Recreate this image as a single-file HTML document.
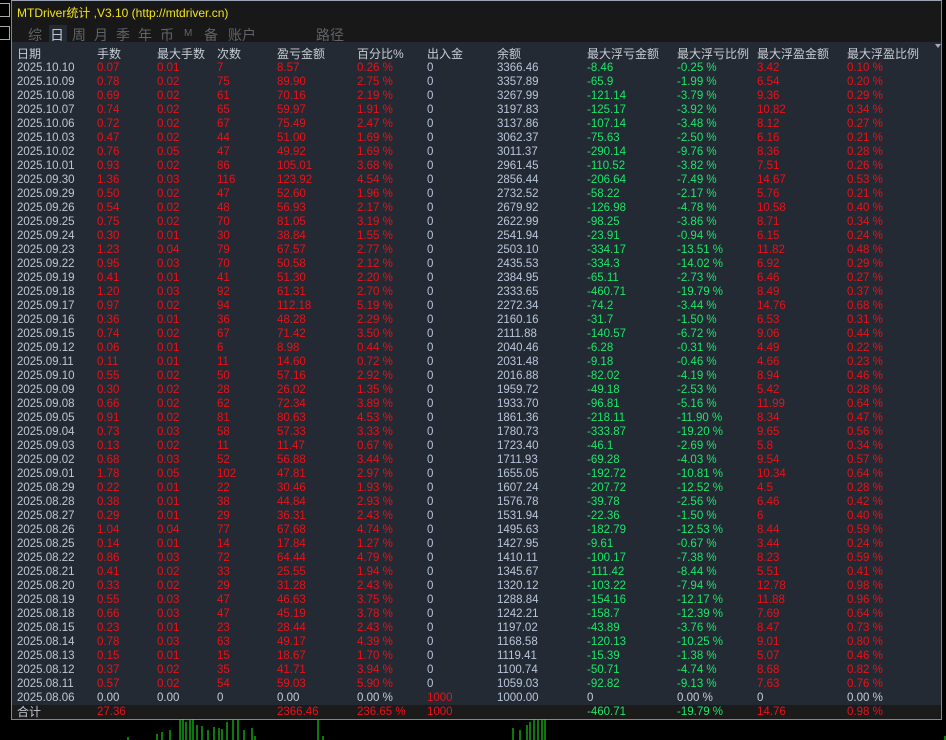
<!DOCTYPE html><html><head><meta charset="utf-8"><style>
body{margin:0;width:946px;height:740px;background:#000;overflow:hidden;position:relative;font-family:"Liberation Sans","Noto Sans CJK SC",sans-serif;}
#p{position:absolute;left:11px;top:0;width:929px;height:718px;border:1px solid #7c8898;border-top-color:#9aa4b4;background:#232a33;}
#t{position:absolute;left:0;top:0;width:929px;height:41px;background:#181818;}
.tt{position:absolute;left:5px;top:3px;color:#f0e418;font-size:12px;}
.tab{position:absolute;top:24px;color:#606468;font-size:14px;}
.r{position:absolute;left:0;width:929px;height:14px;font-size:11.5px;line-height:14px;}
.r span{position:absolute;top:0;white-space:nowrap;}
.h{font-size:12px;color:#c8ccd4;top:45px;height:16px;line-height:16px}
.c0{left:5px}.c1{left:85px}.c2{left:145px}.c3{left:205px}.c4{left:265px}.c5{left:345px}.c6{left:415px}.c7{left:485px}.c8{left:575px}.c9{left:665px}.c10{left:745px}.c11{left:835px}
.d{color:#c0c6d2}.R{color:#ee1018}.G{color:#18e868}.B{color:#b8c6dc}.W{color:#c8ccd8}
#tot{top:704px;height:14px;background:#1b1b1b}
</style></head><body>
<div style="position:absolute;left:0;top:3px;width:9px;height:12px;border:1px solid #aaa;border-left:none"></div>
<div style="position:absolute;left:0;top:26px;width:9px;height:12px;border:1px solid #aaa;border-left:none"></div>
<div id="p">
<div id="t"><div class="tt">MTDriver统计 ,V3.10 (http://mtdriver.cn)</div>
<div style="position:absolute;left:37px;top:24px;width:18px;height:17px;background:#232a33"></div>
<span class="tab" style="left:16px">综</span><span class="tab" style="left:38px;color:#c0c6d0">日</span><span class="tab" style="left:60px">周</span><span class="tab" style="left:82px">月</span><span class="tab" style="left:104px">季</span><span class="tab" style="left:126px">年</span><span class="tab" style="left:148px">币</span><span class="tab" style="left:172px;font-size:10px;top:27px">M</span><span class="tab" style="left:192px">备</span><span class="tab" style="left:216px">账户</span><span class="tab" style="left:304px">路径</span>
</div>
<div style="position:absolute;right:0;top:43px;width:0;height:0;border-left:3px solid transparent;border-right:3px solid transparent;border-top:4px solid #aab"></div>
<div class="r h"><span class="c0">日期</span><span class="c1">手数</span><span class="c2">最大手数</span><span class="c3">次数</span><span class="c4">盈亏金额</span><span class="c5">百分比%</span><span class="c6">出入金</span><span class="c7">余额</span><span class="c8">最大浮亏金额</span><span class="c9">最大浮亏比例</span><span class="c10">最大浮盈金额</span><span class="c11">最大浮盈比例</span></div>
<div class="r" style="top:60px"><span class="c0 d">2025.10.10</span><span class="c1 R">0.07</span><span class="c2 R">0.01</span><span class="c3 R">7</span><span class="c4 R">8.57</span><span class="c5 R">0.26 %</span><span class="c6 B">0</span><span class="c7 B">3366.46</span><span class="c8 G">-8.46</span><span class="c9 G">-0.25 %</span><span class="c10 R">3.42</span><span class="c11 R">0.10 %</span></div>
<div class="r" style="top:74px"><span class="c0 d">2025.10.09</span><span class="c1 R">0.78</span><span class="c2 R">0.02</span><span class="c3 R">75</span><span class="c4 R">89.90</span><span class="c5 R">2.75 %</span><span class="c6 B">0</span><span class="c7 B">3357.89</span><span class="c8 G">-65.9</span><span class="c9 G">-1.99 %</span><span class="c10 R">6.54</span><span class="c11 R">0.20 %</span></div>
<div class="r" style="top:88px"><span class="c0 d">2025.10.08</span><span class="c1 R">0.69</span><span class="c2 R">0.02</span><span class="c3 R">61</span><span class="c4 R">70.16</span><span class="c5 R">2.19 %</span><span class="c6 B">0</span><span class="c7 B">3267.99</span><span class="c8 G">-121.14</span><span class="c9 G">-3.79 %</span><span class="c10 R">9.36</span><span class="c11 R">0.29 %</span></div>
<div class="r" style="top:102px"><span class="c0 d">2025.10.07</span><span class="c1 R">0.74</span><span class="c2 R">0.02</span><span class="c3 R">65</span><span class="c4 R">59.97</span><span class="c5 R">1.91 %</span><span class="c6 B">0</span><span class="c7 B">3197.83</span><span class="c8 G">-125.17</span><span class="c9 G">-3.92 %</span><span class="c10 R">10.82</span><span class="c11 R">0.34 %</span></div>
<div class="r" style="top:116px"><span class="c0 d">2025.10.06</span><span class="c1 R">0.72</span><span class="c2 R">0.02</span><span class="c3 R">67</span><span class="c4 R">75.49</span><span class="c5 R">2.47 %</span><span class="c6 B">0</span><span class="c7 B">3137.86</span><span class="c8 G">-107.14</span><span class="c9 G">-3.48 %</span><span class="c10 R">8.12</span><span class="c11 R">0.27 %</span></div>
<div class="r" style="top:130px"><span class="c0 d">2025.10.03</span><span class="c1 R">0.47</span><span class="c2 R">0.02</span><span class="c3 R">44</span><span class="c4 R">51.00</span><span class="c5 R">1.69 %</span><span class="c6 B">0</span><span class="c7 B">3062.37</span><span class="c8 G">-75.63</span><span class="c9 G">-2.50 %</span><span class="c10 R">6.16</span><span class="c11 R">0.21 %</span></div>
<div class="r" style="top:144px"><span class="c0 d">2025.10.02</span><span class="c1 R">0.76</span><span class="c2 R">0.05</span><span class="c3 R">47</span><span class="c4 R">49.92</span><span class="c5 R">1.69 %</span><span class="c6 B">0</span><span class="c7 B">3011.37</span><span class="c8 G">-290.14</span><span class="c9 G">-9.76 %</span><span class="c10 R">8.36</span><span class="c11 R">0.28 %</span></div>
<div class="r" style="top:158px"><span class="c0 d">2025.10.01</span><span class="c1 R">0.93</span><span class="c2 R">0.02</span><span class="c3 R">86</span><span class="c4 R">105.01</span><span class="c5 R">3.68 %</span><span class="c6 B">0</span><span class="c7 B">2961.45</span><span class="c8 G">-110.52</span><span class="c9 G">-3.82 %</span><span class="c10 R">7.51</span><span class="c11 R">0.26 %</span></div>
<div class="r" style="top:172px"><span class="c0 d">2025.09.30</span><span class="c1 R">1.36</span><span class="c2 R">0.03</span><span class="c3 R">116</span><span class="c4 R">123.92</span><span class="c5 R">4.54 %</span><span class="c6 B">0</span><span class="c7 B">2856.44</span><span class="c8 G">-206.64</span><span class="c9 G">-7.49 %</span><span class="c10 R">14.67</span><span class="c11 R">0.53 %</span></div>
<div class="r" style="top:186px"><span class="c0 d">2025.09.29</span><span class="c1 R">0.50</span><span class="c2 R">0.02</span><span class="c3 R">47</span><span class="c4 R">52.60</span><span class="c5 R">1.96 %</span><span class="c6 B">0</span><span class="c7 B">2732.52</span><span class="c8 G">-58.22</span><span class="c9 G">-2.17 %</span><span class="c10 R">5.76</span><span class="c11 R">0.21 %</span></div>
<div class="r" style="top:200px"><span class="c0 d">2025.09.26</span><span class="c1 R">0.54</span><span class="c2 R">0.02</span><span class="c3 R">48</span><span class="c4 R">56.93</span><span class="c5 R">2.17 %</span><span class="c6 B">0</span><span class="c7 B">2679.92</span><span class="c8 G">-126.98</span><span class="c9 G">-4.78 %</span><span class="c10 R">10.58</span><span class="c11 R">0.40 %</span></div>
<div class="r" style="top:214px"><span class="c0 d">2025.09.25</span><span class="c1 R">0.75</span><span class="c2 R">0.02</span><span class="c3 R">70</span><span class="c4 R">81.05</span><span class="c5 R">3.19 %</span><span class="c6 B">0</span><span class="c7 B">2622.99</span><span class="c8 G">-98.25</span><span class="c9 G">-3.86 %</span><span class="c10 R">8.71</span><span class="c11 R">0.34 %</span></div>
<div class="r" style="top:228px"><span class="c0 d">2025.09.24</span><span class="c1 R">0.30</span><span class="c2 R">0.01</span><span class="c3 R">30</span><span class="c4 R">38.84</span><span class="c5 R">1.55 %</span><span class="c6 B">0</span><span class="c7 B">2541.94</span><span class="c8 G">-23.91</span><span class="c9 G">-0.94 %</span><span class="c10 R">6.15</span><span class="c11 R">0.24 %</span></div>
<div class="r" style="top:242px"><span class="c0 d">2025.09.23</span><span class="c1 R">1.23</span><span class="c2 R">0.04</span><span class="c3 R">79</span><span class="c4 R">67.57</span><span class="c5 R">2.77 %</span><span class="c6 B">0</span><span class="c7 B">2503.10</span><span class="c8 G">-334.17</span><span class="c9 G">-13.51 %</span><span class="c10 R">11.82</span><span class="c11 R">0.48 %</span></div>
<div class="r" style="top:256px"><span class="c0 d">2025.09.22</span><span class="c1 R">0.95</span><span class="c2 R">0.03</span><span class="c3 R">70</span><span class="c4 R">50.58</span><span class="c5 R">2.12 %</span><span class="c6 B">0</span><span class="c7 B">2435.53</span><span class="c8 G">-334.3</span><span class="c9 G">-14.02 %</span><span class="c10 R">6.92</span><span class="c11 R">0.29 %</span></div>
<div class="r" style="top:270px"><span class="c0 d">2025.09.19</span><span class="c1 R">0.41</span><span class="c2 R">0.01</span><span class="c3 R">41</span><span class="c4 R">51.30</span><span class="c5 R">2.20 %</span><span class="c6 B">0</span><span class="c7 B">2384.95</span><span class="c8 G">-65.11</span><span class="c9 G">-2.73 %</span><span class="c10 R">6.46</span><span class="c11 R">0.27 %</span></div>
<div class="r" style="top:284px"><span class="c0 d">2025.09.18</span><span class="c1 R">1.20</span><span class="c2 R">0.03</span><span class="c3 R">92</span><span class="c4 R">61.31</span><span class="c5 R">2.70 %</span><span class="c6 B">0</span><span class="c7 B">2333.65</span><span class="c8 G">-460.71</span><span class="c9 G">-19.79 %</span><span class="c10 R">8.49</span><span class="c11 R">0.37 %</span></div>
<div class="r" style="top:298px"><span class="c0 d">2025.09.17</span><span class="c1 R">0.97</span><span class="c2 R">0.02</span><span class="c3 R">94</span><span class="c4 R">112.18</span><span class="c5 R">5.19 %</span><span class="c6 B">0</span><span class="c7 B">2272.34</span><span class="c8 G">-74.2</span><span class="c9 G">-3.44 %</span><span class="c10 R">14.76</span><span class="c11 R">0.68 %</span></div>
<div class="r" style="top:312px"><span class="c0 d">2025.09.16</span><span class="c1 R">0.36</span><span class="c2 R">0.01</span><span class="c3 R">36</span><span class="c4 R">48.28</span><span class="c5 R">2.29 %</span><span class="c6 B">0</span><span class="c7 B">2160.16</span><span class="c8 G">-31.7</span><span class="c9 G">-1.50 %</span><span class="c10 R">6.53</span><span class="c11 R">0.31 %</span></div>
<div class="r" style="top:326px"><span class="c0 d">2025.09.15</span><span class="c1 R">0.74</span><span class="c2 R">0.02</span><span class="c3 R">67</span><span class="c4 R">71.42</span><span class="c5 R">3.50 %</span><span class="c6 B">0</span><span class="c7 B">2111.88</span><span class="c8 G">-140.57</span><span class="c9 G">-6.72 %</span><span class="c10 R">9.06</span><span class="c11 R">0.44 %</span></div>
<div class="r" style="top:340px"><span class="c0 d">2025.09.12</span><span class="c1 R">0.06</span><span class="c2 R">0.01</span><span class="c3 R">6</span><span class="c4 R">8.98</span><span class="c5 R">0.44 %</span><span class="c6 B">0</span><span class="c7 B">2040.46</span><span class="c8 G">-6.28</span><span class="c9 G">-0.31 %</span><span class="c10 R">4.49</span><span class="c11 R">0.22 %</span></div>
<div class="r" style="top:354px"><span class="c0 d">2025.09.11</span><span class="c1 R">0.11</span><span class="c2 R">0.01</span><span class="c3 R">11</span><span class="c4 R">14.60</span><span class="c5 R">0.72 %</span><span class="c6 B">0</span><span class="c7 B">2031.48</span><span class="c8 G">-9.18</span><span class="c9 G">-0.46 %</span><span class="c10 R">4.66</span><span class="c11 R">0.23 %</span></div>
<div class="r" style="top:368px"><span class="c0 d">2025.09.10</span><span class="c1 R">0.55</span><span class="c2 R">0.02</span><span class="c3 R">50</span><span class="c4 R">57.16</span><span class="c5 R">2.92 %</span><span class="c6 B">0</span><span class="c7 B">2016.88</span><span class="c8 G">-82.02</span><span class="c9 G">-4.19 %</span><span class="c10 R">8.94</span><span class="c11 R">0.46 %</span></div>
<div class="r" style="top:382px"><span class="c0 d">2025.09.09</span><span class="c1 R">0.30</span><span class="c2 R">0.02</span><span class="c3 R">28</span><span class="c4 R">26.02</span><span class="c5 R">1.35 %</span><span class="c6 B">0</span><span class="c7 B">1959.72</span><span class="c8 G">-49.18</span><span class="c9 G">-2.53 %</span><span class="c10 R">5.42</span><span class="c11 R">0.28 %</span></div>
<div class="r" style="top:396px"><span class="c0 d">2025.09.08</span><span class="c1 R">0.66</span><span class="c2 R">0.02</span><span class="c3 R">62</span><span class="c4 R">72.34</span><span class="c5 R">3.89 %</span><span class="c6 B">0</span><span class="c7 B">1933.70</span><span class="c8 G">-96.81</span><span class="c9 G">-5.16 %</span><span class="c10 R">11.99</span><span class="c11 R">0.64 %</span></div>
<div class="r" style="top:410px"><span class="c0 d">2025.09.05</span><span class="c1 R">0.91</span><span class="c2 R">0.02</span><span class="c3 R">81</span><span class="c4 R">80.63</span><span class="c5 R">4.53 %</span><span class="c6 B">0</span><span class="c7 B">1861.36</span><span class="c8 G">-218.11</span><span class="c9 G">-11.90 %</span><span class="c10 R">8.34</span><span class="c11 R">0.47 %</span></div>
<div class="r" style="top:424px"><span class="c0 d">2025.09.04</span><span class="c1 R">0.73</span><span class="c2 R">0.03</span><span class="c3 R">58</span><span class="c4 R">57.33</span><span class="c5 R">3.33 %</span><span class="c6 B">0</span><span class="c7 B">1780.73</span><span class="c8 G">-333.87</span><span class="c9 G">-19.20 %</span><span class="c10 R">9.65</span><span class="c11 R">0.56 %</span></div>
<div class="r" style="top:438px"><span class="c0 d">2025.09.03</span><span class="c1 R">0.13</span><span class="c2 R">0.02</span><span class="c3 R">11</span><span class="c4 R">11.47</span><span class="c5 R">0.67 %</span><span class="c6 B">0</span><span class="c7 B">1723.40</span><span class="c8 G">-46.1</span><span class="c9 G">-2.69 %</span><span class="c10 R">5.8</span><span class="c11 R">0.34 %</span></div>
<div class="r" style="top:452px"><span class="c0 d">2025.09.02</span><span class="c1 R">0.68</span><span class="c2 R">0.03</span><span class="c3 R">52</span><span class="c4 R">56.88</span><span class="c5 R">3.44 %</span><span class="c6 B">0</span><span class="c7 B">1711.93</span><span class="c8 G">-69.28</span><span class="c9 G">-4.03 %</span><span class="c10 R">9.54</span><span class="c11 R">0.57 %</span></div>
<div class="r" style="top:466px"><span class="c0 d">2025.09.01</span><span class="c1 R">1.78</span><span class="c2 R">0.05</span><span class="c3 R">102</span><span class="c4 R">47.81</span><span class="c5 R">2.97 %</span><span class="c6 B">0</span><span class="c7 B">1655.05</span><span class="c8 G">-192.72</span><span class="c9 G">-10.81 %</span><span class="c10 R">10.34</span><span class="c11 R">0.64 %</span></div>
<div class="r" style="top:480px"><span class="c0 d">2025.08.29</span><span class="c1 R">0.22</span><span class="c2 R">0.01</span><span class="c3 R">22</span><span class="c4 R">30.46</span><span class="c5 R">1.93 %</span><span class="c6 B">0</span><span class="c7 B">1607.24</span><span class="c8 G">-207.72</span><span class="c9 G">-12.52 %</span><span class="c10 R">4.5</span><span class="c11 R">0.28 %</span></div>
<div class="r" style="top:494px"><span class="c0 d">2025.08.28</span><span class="c1 R">0.38</span><span class="c2 R">0.01</span><span class="c3 R">38</span><span class="c4 R">44.84</span><span class="c5 R">2.93 %</span><span class="c6 B">0</span><span class="c7 B">1576.78</span><span class="c8 G">-39.78</span><span class="c9 G">-2.56 %</span><span class="c10 R">6.46</span><span class="c11 R">0.42 %</span></div>
<div class="r" style="top:508px"><span class="c0 d">2025.08.27</span><span class="c1 R">0.29</span><span class="c2 R">0.01</span><span class="c3 R">29</span><span class="c4 R">36.31</span><span class="c5 R">2.43 %</span><span class="c6 B">0</span><span class="c7 B">1531.94</span><span class="c8 G">-22.36</span><span class="c9 G">-1.50 %</span><span class="c10 R">6</span><span class="c11 R">0.40 %</span></div>
<div class="r" style="top:522px"><span class="c0 d">2025.08.26</span><span class="c1 R">1.04</span><span class="c2 R">0.04</span><span class="c3 R">77</span><span class="c4 R">67.68</span><span class="c5 R">4.74 %</span><span class="c6 B">0</span><span class="c7 B">1495.63</span><span class="c8 G">-182.79</span><span class="c9 G">-12.53 %</span><span class="c10 R">8.44</span><span class="c11 R">0.59 %</span></div>
<div class="r" style="top:536px"><span class="c0 d">2025.08.25</span><span class="c1 R">0.14</span><span class="c2 R">0.01</span><span class="c3 R">14</span><span class="c4 R">17.84</span><span class="c5 R">1.27 %</span><span class="c6 B">0</span><span class="c7 B">1427.95</span><span class="c8 G">-9.61</span><span class="c9 G">-0.67 %</span><span class="c10 R">3.44</span><span class="c11 R">0.24 %</span></div>
<div class="r" style="top:550px"><span class="c0 d">2025.08.22</span><span class="c1 R">0.86</span><span class="c2 R">0.03</span><span class="c3 R">72</span><span class="c4 R">64.44</span><span class="c5 R">4.79 %</span><span class="c6 B">0</span><span class="c7 B">1410.11</span><span class="c8 G">-100.17</span><span class="c9 G">-7.38 %</span><span class="c10 R">8.23</span><span class="c11 R">0.59 %</span></div>
<div class="r" style="top:564px"><span class="c0 d">2025.08.21</span><span class="c1 R">0.41</span><span class="c2 R">0.02</span><span class="c3 R">33</span><span class="c4 R">25.55</span><span class="c5 R">1.94 %</span><span class="c6 B">0</span><span class="c7 B">1345.67</span><span class="c8 G">-111.42</span><span class="c9 G">-8.44 %</span><span class="c10 R">5.51</span><span class="c11 R">0.41 %</span></div>
<div class="r" style="top:578px"><span class="c0 d">2025.08.20</span><span class="c1 R">0.33</span><span class="c2 R">0.02</span><span class="c3 R">29</span><span class="c4 R">31.28</span><span class="c5 R">2.43 %</span><span class="c6 B">0</span><span class="c7 B">1320.12</span><span class="c8 G">-103.22</span><span class="c9 G">-7.94 %</span><span class="c10 R">12.78</span><span class="c11 R">0.98 %</span></div>
<div class="r" style="top:592px"><span class="c0 d">2025.08.19</span><span class="c1 R">0.55</span><span class="c2 R">0.03</span><span class="c3 R">47</span><span class="c4 R">46.63</span><span class="c5 R">3.75 %</span><span class="c6 B">0</span><span class="c7 B">1288.84</span><span class="c8 G">-154.16</span><span class="c9 G">-12.17 %</span><span class="c10 R">11.88</span><span class="c11 R">0.96 %</span></div>
<div class="r" style="top:606px"><span class="c0 d">2025.08.18</span><span class="c1 R">0.66</span><span class="c2 R">0.03</span><span class="c3 R">47</span><span class="c4 R">45.19</span><span class="c5 R">3.78 %</span><span class="c6 B">0</span><span class="c7 B">1242.21</span><span class="c8 G">-158.7</span><span class="c9 G">-12.39 %</span><span class="c10 R">7.69</span><span class="c11 R">0.64 %</span></div>
<div class="r" style="top:620px"><span class="c0 d">2025.08.15</span><span class="c1 R">0.23</span><span class="c2 R">0.01</span><span class="c3 R">23</span><span class="c4 R">28.44</span><span class="c5 R">2.43 %</span><span class="c6 B">0</span><span class="c7 B">1197.02</span><span class="c8 G">-43.89</span><span class="c9 G">-3.76 %</span><span class="c10 R">8.47</span><span class="c11 R">0.73 %</span></div>
<div class="r" style="top:634px"><span class="c0 d">2025.08.14</span><span class="c1 R">0.78</span><span class="c2 R">0.03</span><span class="c3 R">63</span><span class="c4 R">49.17</span><span class="c5 R">4.39 %</span><span class="c6 B">0</span><span class="c7 B">1168.58</span><span class="c8 G">-120.13</span><span class="c9 G">-10.25 %</span><span class="c10 R">9.01</span><span class="c11 R">0.80 %</span></div>
<div class="r" style="top:648px"><span class="c0 d">2025.08.13</span><span class="c1 R">0.15</span><span class="c2 R">0.01</span><span class="c3 R">15</span><span class="c4 R">18.67</span><span class="c5 R">1.70 %</span><span class="c6 B">0</span><span class="c7 B">1119.41</span><span class="c8 G">-15.39</span><span class="c9 G">-1.38 %</span><span class="c10 R">5.07</span><span class="c11 R">0.46 %</span></div>
<div class="r" style="top:662px"><span class="c0 d">2025.08.12</span><span class="c1 R">0.37</span><span class="c2 R">0.02</span><span class="c3 R">35</span><span class="c4 R">41.71</span><span class="c5 R">3.94 %</span><span class="c6 B">0</span><span class="c7 B">1100.74</span><span class="c8 G">-50.71</span><span class="c9 G">-4.74 %</span><span class="c10 R">8.68</span><span class="c11 R">0.82 %</span></div>
<div class="r" style="top:676px"><span class="c0 d">2025.08.11</span><span class="c1 R">0.57</span><span class="c2 R">0.02</span><span class="c3 R">54</span><span class="c4 R">59.03</span><span class="c5 R">5.90 %</span><span class="c6 B">0</span><span class="c7 B">1059.03</span><span class="c8 G">-92.82</span><span class="c9 G">-9.13 %</span><span class="c10 R">7.63</span><span class="c11 R">0.76 %</span></div>
<div class="r" style="top:690px"><span class="c0 d">2025.08.06</span><span class="c1 W">0.00</span><span class="c2 W">0.00</span><span class="c3 W">0</span><span class="c4 W">0.00</span><span class="c5 W">0.00 %</span><span class="c6 R">1000</span><span class="c7 B">1000.00</span><span class="c8 W">0</span><span class="c9 W">0.00 %</span><span class="c10 W">0</span><span class="c11 W">0.00 %</span></div>
<div class="r" id="tot"><span class="c0 d" style="font-size:12px">合计</span><span class="c1 R">27.36</span><span class="c4 R">2366.46</span><span class="c5 R">236.65 %</span><span class="c6 R">1000</span><span class="c8 G">-460.71</span><span class="c9 G">-19.79 %</span><span class="c10 R">14.76</span><span class="c11 R">0.98 %</span></div>
</div>
<svg style="position:absolute;left:0;top:719px" width="946" height="21">
<g stroke="#1cf01c" fill="none" stroke-width="1">
<path d="M128 21v-3M157 21v-6M162 21v-8M170 21v-10M180 21v-20M183 21v-21M186 21v-18M190 21v-20M193 21v-21M197 21v-15M202 21v-14M208 21v-10M214 21v-13M219 21v-12M222 21v-11M227 21v-18M233 21v-20M238 21v-20M244 21v-10M252 21v-12M255 21v-4M318 21v-20M323 21v-4M513 21v-12M520 21v-10M527 21v-15M530 21v-18M534 21v-21M538 21v-20M542 21v-21M545 21v-21M945 21v-4"/>
</g></svg>
</body></html>
